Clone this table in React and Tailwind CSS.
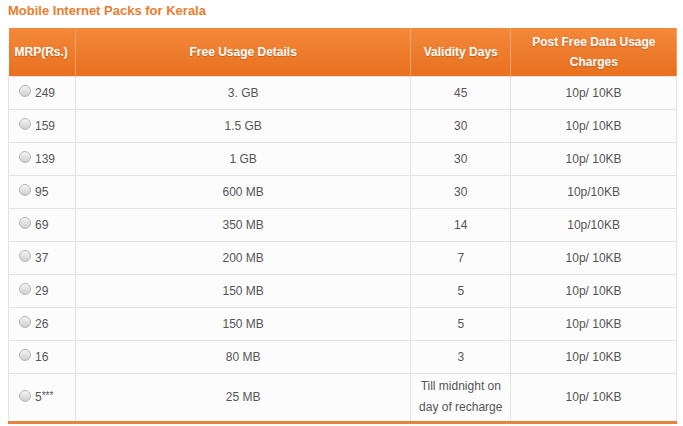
const rows = [
  ["249", "3. GB", "45", "10p/ 10KB"],
  ["159", "1.5 GB", "30", "10p/ 10KB"],
  ["139", "1 GB", "30", "10p/ 10KB"],
  ["95", "600 MB", "30", "10p/10KB"],
  ["69", "350 MB", "14", "10p/10KB"],
  ["37", "200 MB", "7", "10p/ 10KB"],
  ["29", "150 MB", "5", "10p/ 10KB"],
  ["26", "150 MB", "5", "10p/ 10KB"],
  ["16", "80 MB", "3", "10p/ 10KB"],
];

function Radio() {
  return (
    <span className="inline-block w-[12px] h-[12px] rounded-full border border-[#b8b8b8] bg-gradient-to-b from-[#f4f4f4] to-[#cfcfcf] align-middle mr-[4px] relative -top-[2px]" />
  );
}

export default function App() {
  return (
    <div className="w-[683px] h-[426px] bg-white overflow-hidden font-['Liberation_Sans',Arial,sans-serif]">
      <div className="pl-[8px] pt-[3px] h-[28px] text-[13px] font-bold text-[#ea7d2e] leading-[16px]">
        Mobile Internet Packs for Kerala
      </div>
      <table className="ml-[8px] w-[669px] border-collapse text-[12px] text-[#555]">
        <thead>
          <tr className="h-[48px] bg-gradient-to-b from-[#f4883a] to-[#e8701e] text-white font-bold [text-shadow:0_1px_1px_rgba(120,50,0,0.35)]">
            <th className="w-[67px] border-r border-[#f6a566] px-[4px] text-left pl-[6px] font-bold">MRP(Rs.)</th>
            <th className="w-[336px] border-r border-[#f6a566] font-bold">Free Usage Details</th>
            <th className="w-[100px] border-r border-[#f6a566] font-bold">Validity Days</th>
            <th className="w-[166px] font-bold leading-[20px]">Post Free Data Usage<br />Charges</th>
          </tr>
        </thead>
        <tbody>
          {rows.map((r, i) => (
            <tr key={i} className="h-[33px] bg-[#fcfcfc]">
              <td className="border border-[#e3e3e3] pl-[10px]"><Radio />{r[0]}</td>
              <td className="border border-[#e3e3e3] text-center">{r[1]}</td>
              <td className="border border-[#e3e3e3] text-center">{r[2]}</td>
              <td className="border border-[#e3e3e3] text-center">{r[3]}</td>
            </tr>
          ))}
          <tr className="h-[49px] bg-[#fcfcfc] border-b-[3px] border-b-[#e8823a]">
            <td className="border-l border-r border-t border-[#e3e3e3] pl-[10px]"><Radio />5<span className="text-[10px] relative -top-[2px]">***</span></td>
            <td className="border-r border-t border-[#e3e3e3] text-center">25 MB</td>
            <td className="border-r border-t border-[#e3e3e3] text-center leading-[21px]">Till midnight on<br />day of recharge</td>
            <td className="border-r border-t border-[#e3e3e3] text-center">10p/ 10KB</td>
          </tr>
        </tbody>
      </table>
    </div>
  );
}
